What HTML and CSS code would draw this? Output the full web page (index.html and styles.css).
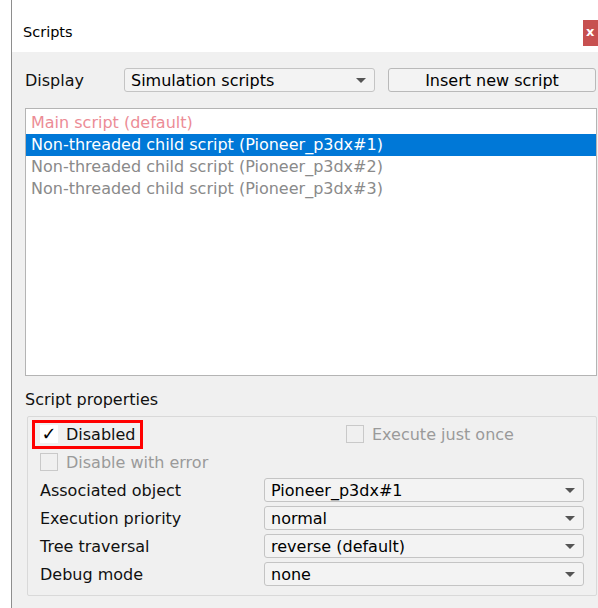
FILE: index.html
```html
<!DOCTYPE html>
<html>
<head>
<meta charset="utf-8">
<title>Scripts</title>
<link rel="stylesheet" href="styles.css">
</head>
<body>
<div class="window">
  <div class="titlebar">
    <span class="title">Scripts</span>
    <span class="close">x</span>
  </div>
  <div class="content">
    <div class="toolbar">
      <span class="label display-label">Display</span>
      <div class="combo display-combo"><span>Simulation scripts</span><span class="arrow"></span></div>
      <div class="button">Insert new script</div>
    </div>
    <div class="list">
      <div class="item main">Main script (default)</div>
      <div class="item selected">Non-threaded child script (Pioneer_p3dx#1)</div>
      <div class="item">Non-threaded child script (Pioneer_p3dx#2)</div>
      <div class="item">Non-threaded child script (Pioneer_p3dx#3)</div>
    </div>
    <div class="group-title">Script properties</div>
    <div class="group">
      <div class="row checks">
        <div class="check-wrap highlight">
          <span class="box checked">&#10003;</span><span class="check-label">Disabled</span>
        </div>
        <div class="check-wrap once">
          <span class="box disabled"></span><span class="check-label muted">Execute just once</span>
        </div>
      </div>
      <div class="row checks">
        <div class="check-wrap">
          <span class="box disabled"></span><span class="check-label muted">Disable with error</span>
        </div>
      </div>
      <div class="row field">
        <span class="label">Associated object</span>
        <div class="combo"><span>Pioneer_p3dx#1</span><span class="arrow"></span></div>
      </div>
      <div class="row field">
        <span class="label">Execution priority</span>
        <div class="combo"><span>normal</span><span class="arrow"></span></div>
      </div>
      <div class="row field">
        <span class="label">Tree traversal</span>
        <div class="combo"><span>reverse (default)</span><span class="arrow"></span></div>
      </div>
      <div class="row field">
        <span class="label">Debug mode</span>
        <div class="combo"><span>none</span><span class="arrow"></span></div>
      </div>
    </div>
  </div>
</div>
</body>
</html>
```
FILE: styles.css
```css
* { box-sizing: border-box; }

html, body {
  margin: 0;
  padding: 0;
  background: #ffffff;
  width: 598px;
  height: 608px;
  overflow: hidden;
}

body {
  font-family: "DejaVu Sans", Verdana, sans-serif;
  font-size: 16px;
  color: #111111;
}

.window {
  margin-left: 11px;
  height: 608px;
  border-left: 1px solid #8e8e8e;
  display: flex;
  flex-direction: column;
}

.titlebar {
  height: 52px;
  background: #ffffff;
  display: flex;
  justify-content: space-between;
  align-items: flex-start;
  padding-left: 11px;
}

.title {
  margin-top: 24px;
  font-size: 14.5px;
  color: #000;
}

.close {
  margin-top: 20px;
  width: 15px;
  height: 26px;
  background: #c75050;
  color: #fff;
  font-size: 13px;
  font-weight: bold;
  line-height: 24px;
  padding-left: 3px;
}

.content {
  flex: 1;
  background: #f0f0f0;
  padding: 16px 1px 0 13px;
}

.toolbar {
  display: flex;
  align-items: center;
  height: 24px;
}

.display-label {
  width: 99px;
}

.combo {
  height: 24px;
  background: #f3f3f3;
  border: 1px solid #c4c4c4;
  border-radius: 3px;
  display: flex;
  align-items: center;
  justify-content: space-between;
  padding: 0 8px 0 6px;
  color: #000;
}

.display-combo {
  width: 251px;
}

.arrow {
  width: 0;
  height: 0;
  border-left: 5px solid transparent;
  border-right: 5px solid transparent;
  border-top: 5px solid #555;
}

.button {
  margin-left: 13px;
  width: 208px;
  height: 24px;
  background: #f3f3f3;
  border: 1px solid #b9b9b9;
  border-radius: 3px;
  display: flex;
  align-items: center;
  justify-content: center;
  color: #000;
}

.list {
  margin-top: 16px;
  height: 268px;
  background: #ffffff;
  border: 1px solid #b4b4b4;
  padding-top: 3px;
}

.item {
  height: 22px;
  line-height: 22px;
  padding-left: 5px;
  color: #8a8a8a;
  white-space: nowrap;
}

.item.main {
  color: #ec8c96;
}

.item.selected {
  background: #0078d7;
  color: #ffffff;
}

.group-title {
  margin-top: 13px;
  height: 22px;
  line-height: 22px;
}

.group {
  margin: 5px 0 0 2px;
  height: 180px;
  border: 1px solid #d9d9d9;
  border-radius: 2px;
  padding: 3px 0 0 4px;
}

.row {
  display: flex;
  align-items: center;
  height: 28px;
}

.check-wrap {
  display: flex;
  align-items: center;
  height: 29px;
  padding-left: 8px;
}

.highlight {
  border: 3px solid #ff0000;
  width: 111px;
  padding-left: 5px;
}

.once {
  margin-left: 195px;
}

.box {
  width: 18px;
  height: 18px;
  border: 1px solid #c9c9c9;
  background: #f0f0f0;
  margin-right: 8px;
  display: flex;
  align-items: center;
  justify-content: center;
  font-size: 18px;
  line-height: 1;
}

.box.checked {
  background: #ffffff;
  border-color: #ffffff;
  color: #000;
  font-weight: bold;
}

.check-label.muted {
  color: #9a9a9a;
}

.field {
  padding-left: 8px;
}

.field .label {
  width: 224px;
}

.field .combo {
  width: 320px;
}
```
